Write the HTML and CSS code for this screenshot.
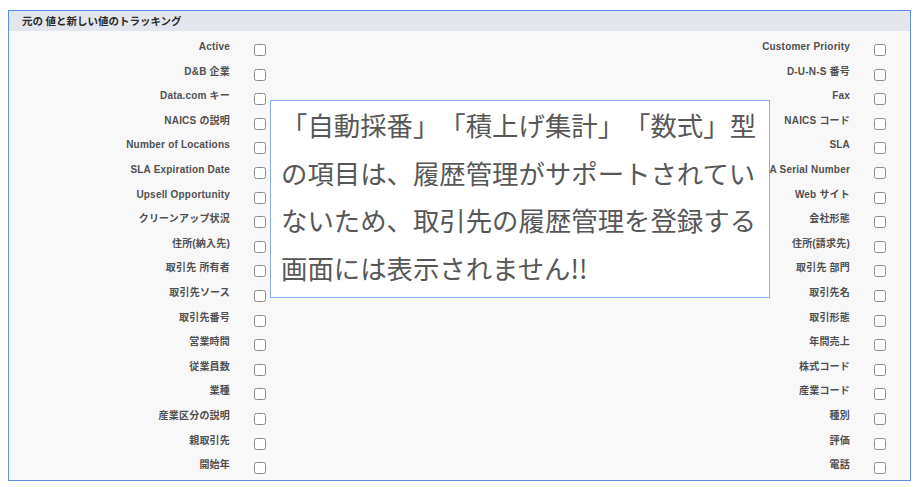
FILE: index.html
```html
<!DOCTYPE html>
<html lang="ja">
<head>
<meta charset="utf-8">
<link rel="stylesheet" href="styles.css">
</head>
<body>
<div class="panel">
  <div class="panel-header">元の 値と新しい値のトラッキング</div>
  <div class="panel-body">
    <div class="grid">
      <span class="lbl">Active</span><span class="cb"></span><span class="lbl">Customer Priority</span><span class="cb"></span>
      <span class="lbl">D&amp;B 企業</span><span class="cb"></span><span class="lbl">D-U-N-S 番号</span><span class="cb"></span>
      <span class="lbl">Data.com キー</span><span class="cb"></span><span class="lbl">Fax</span><span class="cb"></span>
      <span class="lbl">NAICS の説明</span><span class="cb"></span><span class="lbl">NAICS コード</span><span class="cb"></span>
      <span class="lbl">Number of Locations</span><span class="cb"></span><span class="lbl">SLA</span><span class="cb"></span>
      <span class="lbl">SLA Expiration Date</span><span class="cb"></span><span class="lbl">SLA Serial Number</span><span class="cb"></span>
      <span class="lbl">Upsell Opportunity</span><span class="cb"></span><span class="lbl">Web サイト</span><span class="cb"></span>
      <span class="lbl">クリーンアップ状況</span><span class="cb"></span><span class="lbl">会社形態</span><span class="cb"></span>
      <span class="lbl">住所(納入先)</span><span class="cb"></span><span class="lbl">住所(請求先)</span><span class="cb"></span>
      <span class="lbl">取引先 所有者</span><span class="cb"></span><span class="lbl">取引先 部門</span><span class="cb"></span>
      <span class="lbl">取引先ソース</span><span class="cb"></span><span class="lbl">取引先名</span><span class="cb"></span>
      <span class="lbl">取引先番号</span><span class="cb"></span><span class="lbl">取引形態</span><span class="cb"></span>
      <span class="lbl">営業時間</span><span class="cb"></span><span class="lbl">年間売上</span><span class="cb"></span>
      <span class="lbl">従業員数</span><span class="cb"></span><span class="lbl">株式コード</span><span class="cb"></span>
      <span class="lbl">業種</span><span class="cb"></span><span class="lbl">産業コード</span><span class="cb"></span>
      <span class="lbl">産業区分の説明</span><span class="cb"></span><span class="lbl">種別</span><span class="cb"></span>
      <span class="lbl">親取引先</span><span class="cb"></span><span class="lbl">評価</span><span class="cb"></span>
      <span class="lbl">開始年</span><span class="cb"></span><span class="lbl">電話</span><span class="cb"></span>
    </div>
  </div>
  <div class="callout">「自動採番」「積上げ集計」「数式」型<br>の項目は、履歴管理がサポートされてい<br>ないため、取引先の履歴管理を登録する<br>画面には表示されません!!</div>
</div>
</body>
</html>
```

FILE: styles.css
```css
html, body {
  margin: 0;
  padding: 0;
  background: #ffffff;
}
body {
  padding: 10px 6px 0 8px;
  font-family: "Liberation Sans", "Noto Sans CJK JP", sans-serif;
}
.panel {
  position: relative;
  border: 1px solid #5a8fe4;
  background: #f8f8f8;
  width: 901px;
}
.panel-header {
  height: 20px;
  line-height: 20px;
  background: #e4e6ee;
  padding-left: 13px;
  font-size: 10.5px;
  font-weight: bold;
  color: #2a2a2a;
  font-family: "Noto Sans CJK JP", sans-serif;
}
.panel-body {
  padding: 6px 24px 0 0;
}
.grid {
  display: grid;
  grid-template-columns: 221px 12px 1fr 12px;
  grid-auto-rows: 24.6px;
  column-gap: 24px;
}
.lbl {
  text-align: right;
  font-size: 10px;
  font-weight: bold;
  color: #505050;
  line-height: 14px;
  padding-top: 3px;
  letter-spacing: 0.2px;
  white-space: nowrap;
}
.cb {
  box-sizing: border-box;
  width: 12px;
  height: 12px;
  margin-top: 7px;
  border: 1px solid #8c8c8c;
  border-radius: 2.5px;
  background: #ffffff;
}
.callout {
  position: absolute;
  left: 261px;
  top: 89px;
  box-sizing: border-box;
  width: 500px;
  height: 198px;
  background: #ffffff;
  border: 1px solid #86adee;
  padding: 0 10px;
  font-family: "Noto Sans CJK JP", sans-serif;
  font-size: 26.4px;
  line-height: 47.5px;
  color: #575757;
  white-space: nowrap;
  text-spacing-trim: space-all;
  font-feature-settings: "halt" 0, "chws" 0;
}
```
